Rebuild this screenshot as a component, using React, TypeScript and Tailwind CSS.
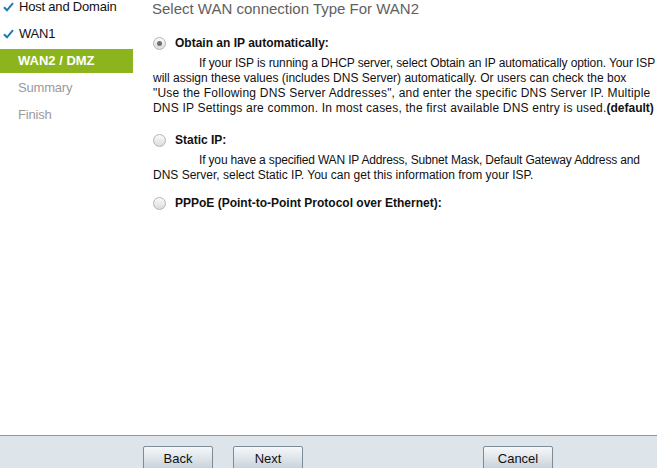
import React, { useState } from 'react';

const steps = [
  { label: 'Host and Domain', state: 'done' },
  { label: 'WAN1', state: 'done' },
  { label: 'WAN2 / DMZ', state: 'active' },
  { label: 'Summary', state: 'todo' },
  { label: 'Finish', state: 'todo' },
];

type Line = { t: string; cls: string };

const options: { id: string; label: string; gap: string; lines?: Line[]; suffix?: string }[] = [
  {
    id: 'dhcp',
    label: 'Obtain an IP automatically:',
    gap: '',
    lines: [
      { t: 'If your ISP is running a DHCP server, select Obtain an IP automatically option. Your ISP', cls: 'tracking-[-0.1px]' },
      { t: 'will assign these values (includes DNS Server) automatically. Or users can check the box', cls: 'tracking-normal' },
      { t: '"Use the Following DNS Server Addresses", and enter the specific DNS Server IP. Multiple', cls: 'tracking-[0.2px]' },
      { t: 'DNS IP Settings are common. In most cases, the first available DNS entry is used.', cls: 'tracking-[0.2px]' },
    ],
    suffix: '(default)',
  },
  {
    id: 'static',
    label: 'Static IP:',
    gap: 'mt-[16px]',
    lines: [
      { t: 'If you have a specified WAN IP Address, Subnet Mask, Default Gateway Address and', cls: 'tracking-[-0.16px]' },
      { t: 'DNS Server, select Static IP. You can get this information from your ISP.', cls: 'tracking-normal' },
    ],
  },
  {
    id: 'pppoe',
    label: 'PPPoE (Point-to-Point Protocol over Ethernet):',
    gap: 'mt-[12px]',
  },
];

function Check() {
  return (
    <svg width="11" height="10" viewBox="0 0 11 10" className="mr-[5px] shrink-0">
      <path d="M1 5.2 L4 8.3 L10 1.2" fill="none" stroke="#1f78b4" strokeWidth="2" />
    </svg>
  );
}

function Radio({ checked }: { checked: boolean }) {
  return (
    <span className="w-[13px] h-[13px] rounded-full border border-[#b4b4b4] bg-gradient-to-b from-[#fafafa] to-[#dcdcdc] flex items-center justify-center shrink-0">
      {checked && <span className="w-[5px] h-[5px] rounded-full bg-[#6f6f6f]" />}
    </span>
  );
}

function Btn({ children }: { children: React.ReactNode }) {
  return (
    <button className="w-[70px] h-[25px] border border-[#7d8b97] rounded-[2px] bg-gradient-to-b from-[#f6f8fa] to-[#c6d0d9] text-[13px] text-[#111] leading-none">
      {children}
    </button>
  );
}

export default function App() {
  const [selected, setSelected] = useState('dhcp');

  return (
    <div className="h-[468px] w-[657px] flex flex-col bg-white overflow-hidden font-['Liberation_Sans',Arial,sans-serif]">
      <div className="flex flex-1 min-h-0">
        {/* Wizard steps */}
        <div className="w-[133px] shrink-0 flex flex-col gap-[3px] -mt-[5px]">
          {steps.map((s) => (
            <div
              key={s.label}
              className={
                s.state === 'active'
                  ? 'h-[24px] flex items-center pl-[18px] bg-[#8cb41c] text-white font-bold text-[13px]'
                  : 'h-[24px] flex items-center text-[13px] tracking-[-0.2px] ' +
                    (s.state === 'done' ? 'pl-[3px] text-[#111]' : 'pl-[18px] text-[#9a9a9a]')
              }
            >
              {s.state === 'done' && <Check />}
              {s.label}
            </div>
          ))}
        </div>

        {/* Main */}
        <div className="flex-1 pl-[19px]">
          <h1 className="text-[15px] leading-[17px] text-[#5f5f5f]">Select WAN connection Type For WAN2</h1>

          <div className="mt-[18px] pl-[1px] flex flex-col">
            {options.map((o) => (
              <div key={o.id} className={o.gap}>
                <label className="flex items-center gap-[9px] h-[16px] cursor-pointer" onClick={() => setSelected(o.id)}>
                  <Radio checked={selected === o.id} />
                  <span className="text-[12px] font-bold text-[#111]">{o.label}</span>
                </label>
                {o.lines && (
                  <p className="mt-[5px] text-[12px] leading-[15px] text-[#111] indent-[46px] whitespace-nowrap">
                    {o.lines.map((l, i) => (
                      <React.Fragment key={i}>
                        {i > 0 && <br />}
                        <span className={l.cls}>{l.t}</span>
                      </React.Fragment>
                    ))}
                    {o.suffix && <b>{o.suffix}</b>}
                  </p>
                )}
              </div>
            ))}
          </div>
        </div>
      </div>

      {/* Footer buttons */}
      <div className="h-[33px] shrink-0 border-t border-[#8a99a4] bg-[#dde4ea] flex items-start pt-[10px] pl-[143px]">
        <Btn>Back</Btn>
        <div className="ml-[20px]">
          <Btn>Next</Btn>
        </div>
        <div className="ml-[180px]">
          <Btn>Cancel</Btn>
        </div>
      </div>
    </div>
  );
}
